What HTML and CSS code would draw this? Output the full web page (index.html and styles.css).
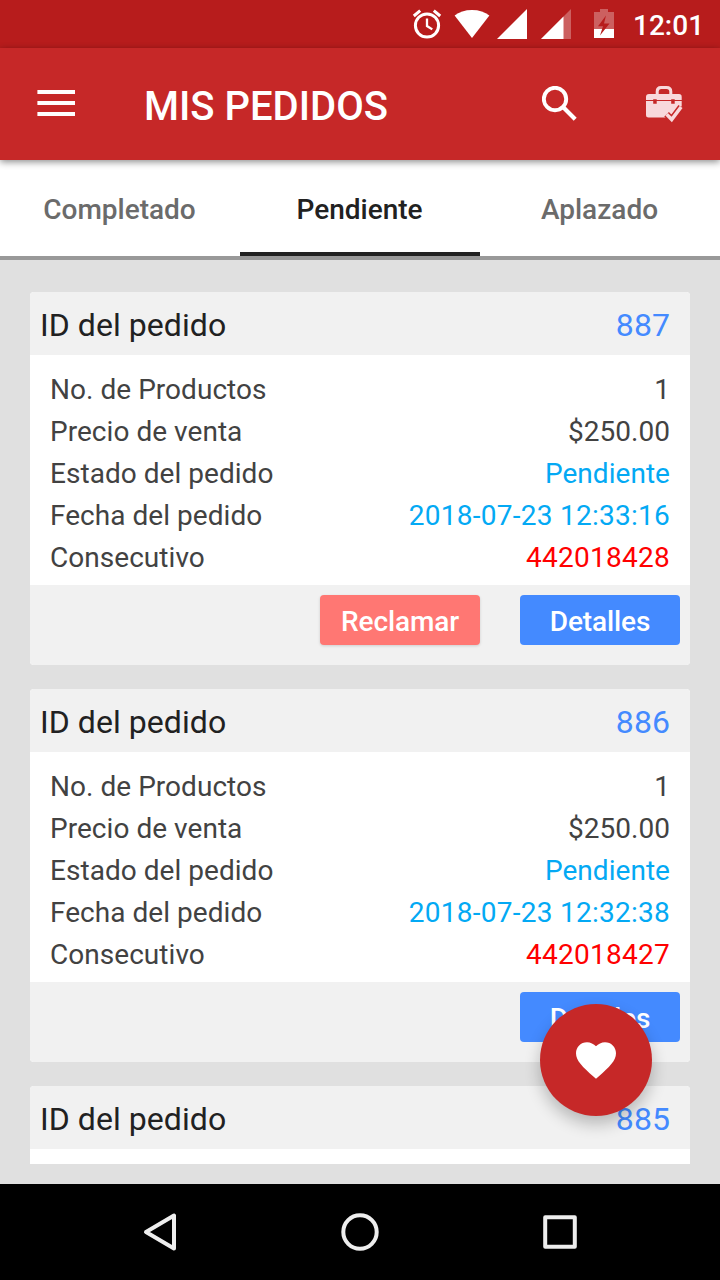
FILE: index.html
```html
<!DOCTYPE html>
<html lang="es">
<head>
  <meta charset="UTF-8" />
  <meta name="viewport" content="width=device-width, initial-scale=1.0" />
  <title>Mis pedidos</title>
  <link rel="stylesheet" href="styles.css">
</head>
<body>
  <div class="app">

    <!-- Barra de estado -->
    <div class="estado">
      <svg class="ico-alarma" width="30" height="30" viewBox="0 0 30 30" fill="none" stroke="#fff">
        <circle cx="15" cy="16.5" r="11.6" stroke-width="3"/>
        <path d="M15 9.5v7.5l5.3 3.4" stroke-width="2.3"/>
        <path d="M1.8 7l6.4-5.4M21.8 1.6L28.2 7" stroke-width="3"/>
      </svg>
      <svg class="ico-wifi" width="36" height="30" viewBox="0 0 36 30" fill="#fff">
        <path d="M18 29L.6 6.6C5 3 11 1 18 1s13 2 17.4 5.6z"/>
      </svg>
      <svg class="ico-senal" width="30" height="30" viewBox="0 0 30 30" fill="#fff">
        <path d="M0 30L30 0v30z"/>
      </svg>
      <svg class="ico-senal2" width="30" height="30" viewBox="0 0 30 30" fill="#fff">
        <path d="M0 30L30 0v30z" opacity=".3"/>
        <path d="M0 30L22.5 7.5V30z"/>
      </svg>
      <svg class="ico-bateria" width="20" height="30" viewBox="0 0 20 30" fill="#fff">
        <path d="M0 3h6V0h8v3h6v26H0z" opacity=".3"/>
        <path d="M0 20h20v9H0z"/>
        <path d="M12 6.5L4 17.2h5L6 26.5l9.5-12H10z" fill="#b71c1c"/>
      </svg>
      <span class="hora">12:01</span>
    </div>

    <!-- Encabezado -->
    <header class="encabezado">
      <svg class="ico-menu" width="38" height="28" viewBox="0 0 38 28" fill="#fff">
        <path d="M.4 1H38v4H.4zM.4 12H38v4H.4zM.4 23H38v4H.4z"/>
      </svg>
      <h1>MIS PEDIDOS</h1>
      <svg class="ico-buscar" width="36" height="36" viewBox="0 0 36 36" fill="none" stroke="#fff">
        <circle cx="13" cy="13" r="11.2" stroke-width="3.9"/>
        <path d="M21.5 21.5L33.2 33.2" stroke-width="4.2"/>
      </svg>
      <svg class="ico-maletin" width="38" height="38" viewBox="0 0 38 38">
        <path d="M12.2 9V6.5Q12.2 2.5 16 2.5h5.500Q25.800 2.500 25.800 6.500V9" fill="none" stroke="#f8d9dc" stroke-width="3"/>
        <path d="M4 9h30q2.700 0 2.700 2.700V32.500H3.500Q1 32.500 1 30V12Q1 9 4 9z" fill="#f8d9dc"/>
        <path d="M1 15.500H37" stroke="#c62828" stroke-width="1"/>
        <path d="M8.200 14.200h3.500v4.500H8.200zM26.200 14.200h3.500v4.500h-3.500z" fill="#c62828"/>
        <path d="M21.600 29.300l5.100 5.200L38 19.500V38H21.600z" fill="#c62828"/>
        <path d="M21.600 29.300l5.100 5.200L36.100 22" fill="none" stroke="#c62828" stroke-width="6.500"/>
        <path d="M21.600 29.300l5.100 5.200L36.100 22" fill="none" stroke="#f8d9dc" stroke-width="3.600"/>
      </svg>
    </header>

    <!-- Pestañas -->
    <nav class="pestanas">
      <div class="pestana">Completado</div>
      <div class="pestana activa">Pendiente</div>
      <div class="pestana">Aplazado</div>
    </nav>

    <!-- Lista de pedidos -->
    <main class="lista">

      <!-- Pedido 887 -->
      <div class="pedido">
        <div class="pedido-titulo"><span>ID del pedido</span><span class="numero">887</span></div>
        <div class="detalle">
          <div class="fila"><span>No. de Productos</span><span>1</span></div>
          <div class="fila"><span>Precio de venta</span><span>$250.00</span></div>
          <div class="fila"><span>Estado del pedido</span><span class="celeste">Pendiente</span></div>
          <div class="fila"><span>Fecha del pedido</span><span class="celeste fecha">2018-07-23 12:33:16</span></div>
          <div class="fila"><span>Consecutivo</span><span class="rojo">442018428</span></div>
        </div>
        <div class="acciones">
          <button class="btn btn-reclamar">Reclamar</button>
          <button class="btn btn-detalles">Detalles</button>
        </div>
      </div>

      <!-- Pedido 886 -->
      <div class="pedido">
        <div class="pedido-titulo"><span>ID del pedido</span><span class="numero">886</span></div>
        <div class="detalle">
          <div class="fila"><span>No. de Productos</span><span>1</span></div>
          <div class="fila"><span>Precio de venta</span><span>$250.00</span></div>
          <div class="fila"><span>Estado del pedido</span><span class="celeste">Pendiente</span></div>
          <div class="fila"><span>Fecha del pedido</span><span class="celeste fecha">2018-07-23 12:32:38</span></div>
          <div class="fila"><span>Consecutivo</span><span class="rojo">442018427</span></div>
        </div>
        <div class="acciones">
          <button class="btn btn-detalles">Detalles</button>
        </div>
      </div>

      <!-- Pedido 885 -->
      <div class="pedido cortado">
        <div class="pedido-titulo"><span>ID del pedido</span><span class="numero">885</span></div>
      </div>
    </main>

    <!-- Botón flotante -->
    <button class="flotante" aria-label="Favoritos">
      <svg width="40" height="37" viewBox="2 3 20 18.35" fill="#fff">
        <path d="M12 21.35l-1.45-1.32C5.4 15.36 2 12.28 2 8.5 2 5.42 4.42 3 7.5 3c1.740 0 3.410.810 4.500 2.090C13.090 3.810 14.760 3 16.500 3 19.580 3 22 5.420 22 8.500c0 3.780-3.400 6.860-8.550 11.540L12 21.350z"/>
      </svg>
    </button>

    <!-- Barra de navegación -->
    <div class="navegacion">
      <svg width="40" height="40" viewBox="0 0 40 40">
        <path d="M6 20L34 3.500v33z"/>
      </svg>
      <svg width="40" height="40" viewBox="0 0 40 40">
        <circle cx="20" cy="20" r="16.7"/>
      </svg>
      <svg width="40" height="40" viewBox="0 0 40 40">
        <rect x="5.2" y="5.2" width="29.6" height="29.6"/>
      </svg>
    </div>
  </div>
</body>
</html>
```

FILE: styles.css
```css
* {
  box-sizing: border-box;
}
body {
  font-family: Roboto, sans-serif;
  margin: 0;
  background-color: #000;
}
svg {
  display: block;
  flex-shrink: 0;
}
.app {
  position: relative;
  width: 720px;
  height: 1280px;
  display: flex;
  flex-direction: column;
  background-color: #e0e0e0;
  overflow: hidden;
}

/* Barra de estado */
.estado {
  height: 48px;
  display: flex;
  align-items: center;
  justify-content: flex-end;
  padding-right: 17px;
  background-color: #b71c1c;
  color: #fff;
}
.ico-wifi {
  margin-left: 12px;
}
.ico-senal {
  margin-left: 7px;
}
.ico-senal2 {
  margin-left: 14px;
}
.ico-bateria {
  margin-left: 23px;
}
.hora {
  width: 70px;
  margin-left: 19px;
  font-size: 28px;
  font-weight: 500;
  line-height: 33px;
  text-align: right;
  padding-top: 2px;
}

/* Encabezado */
.encabezado {
  position: relative;
  z-index: 1;
  height: 112px;
  display: flex;
  align-items: center;
  padding: 0 37px;
  background-color: #c62828;
  box-shadow: 0 2px 7px rgba(0, 0, 0, 0.45);
}
.ico-menu {
  margin-bottom: 2px;
}
.encabezado h1 {
  flex: 1;
  margin: 6px 0 0 69px;
  color: #fff;
  font-size: 40px;
  font-weight: 500;
  line-height: 48px;
}
.ico-maletin {
  margin-left: 67px;
}

/* Pestañas */
.pestanas {
  height: 100px;
  display: flex;
  background-color: #fff;
  border-bottom: 4px solid #999;
}
.pestana {
  flex: 1;
  padding: 4px 1px 0 0;
  text-align: center;
  color: #6b6b6b;
  font-size: 28px;
  font-weight: 500;
  line-height: 92px;
}
.pestana.activa {
  color: #212121;
  border-bottom: 4px solid #212121;
}

/* Pedidos */
.lista {
  height: 904px;
  padding: 32px 30px 0;
  display: flex;
  flex-direction: column;
  gap: 24px;
}
.pedido {
  background-color: #fff;
  border-radius: 4px;
  overflow: hidden;
}
.cortado {
  height: 78px;
  border-radius: 4px 4px 0 0;
}
.pedido-titulo {
  height: 63px;
  display: flex;
  justify-content: space-between;
  padding: 0 20px 0 10px;
  background-color: #f1f1f1;
  color: #212121;
  font-size: 32px;
  line-height: 66px;
  letter-spacing: 0.06px;
}
.numero {
  color: #448aff;
}
.detalle {
  height: 230px;
  padding: 14px 20px 0;
  color: #424242;
}
.fila {
  display: flex;
  justify-content: space-between;
  font-size: 28px;
  line-height: 42px;
  letter-spacing: 0.04px;
}
.celeste {
  color: #03a9f4;
}
.rojo {
  color: #ff0000;
  letter-spacing: 0.25px;
}
.fecha {
  letter-spacing: 0.26px;
}
.acciones {
  height: 80px;
  display: flex;
  justify-content: flex-end;
  gap: 40px;
  padding: 10px 10px 0 0;
  background-color: #f1f1f1;
}
.btn {
  width: 160px;
  height: 50px;
  padding: 3px 0 0;
  border: none;
  border-radius: 4px;
  color: #fff;
  font-family: inherit;
  font-size: 28px;
  font-weight: 500;
  letter-spacing: -0.1px;
}
.btn-reclamar {
  background-color: #ff7773;
  box-shadow: 0 1px 3px rgba(0, 0, 0, 0.15);
}
.btn-detalles {
  background-color: #448aff;
}

/* Botón flotante */
.flotante {
  position: absolute;
  right: 68px;
  bottom: 164px;
  width: 112px;
  height: 112px;
  display: flex;
  align-items: center;
  justify-content: center;
  padding: 0;
  border: none;
  border-radius: 50%;
  background-color: #c62828;
  box-shadow: 0 8px 16px rgba(0, 0, 0, 0.24);
}

/* Navegación */
.navegacion {
  flex: 1;
  display: flex;
  align-items: center;
  justify-content: center;
  gap: 160px;
  margin-top: 20px;
  background-color: #000;
}
.navegacion svg {
  fill: none;
  stroke: #eee;
  stroke-width: 4;
  stroke-linejoin: round;
}
```
